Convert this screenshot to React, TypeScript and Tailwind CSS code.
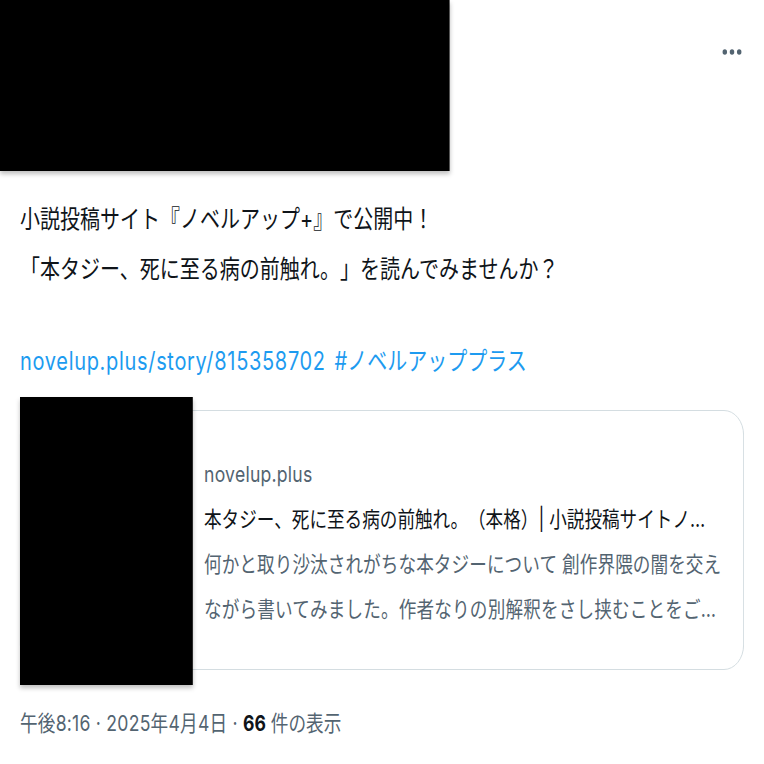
import React from 'react';

// The screenshot is horizontally squeezed (~80%), so the page is laid out at
// full width and scaled on the x axis.
const font = { fontFamily: '"Inter", "Noto Sans CJK JP", sans-serif' };

function MoreIcon() {
  return (
    <svg width="26" height="8" viewBox="0 0 26 8" className="text-[#536471]" fill="currentColor">
      <circle cx="4" cy="4" r="2.8" />
      <circle cx="13" cy="4" r="2.8" />
      <circle cx="22" cy="4" r="2.8" />
    </svg>
  );
}

export default function App() {
  return (
    <div className="w-[764px] h-[764px] overflow-hidden bg-white [text-spacing-trim:space-all]" style={font}>
      <div className="w-[955px] origin-top-left scale-x-[0.8] text-[#0f1419]">
        {/* header (redacted) */}
        <div className="flex items-start">
          <div className="w-[562px] h-[171px] bg-black shadow-[0_3px_5px_rgba(0,0,0,0.25)]" />
          <button className="ml-auto mr-[27px] mt-[48px]">
            <MoreIcon />
          </button>
        </div>

        <div className="px-[25px]">
          <p className="mt-[23px] text-[25px] leading-[50px]">
            小説投稿サイト『ノベルアップ+』で公開中！
            <br />
            「本タジー、死に至る病の前触れ。」を読んでみませんか？
          </p>

          <p className="mt-[50px] text-[25px] leading-[35px] text-[#1d9bf0]">
            <span className="tracking-[0.85px]">novelup.plus/story/815358702</span>
            <span className="ml-[11px]">#ノベルアッププラス</span>
          </p>

          {/* link card */}
          <div className="relative mt-[31px] h-[260px] flex rounded-[25px] border-[1.5px] border-[#cfd9de]">
            <div className="w-[216px] shrink-0" />
            <div className="flex flex-col justify-center pl-[13px] pt-[4px] text-[22px] leading-[45px] whitespace-nowrap">
              <div className="text-[#536471] tracking-[0.3px]">novelup.plus</div>
              <div>本タジー、死に至る病の前触れ。（本格）| 小説投稿サイトノ…</div>
              <div className="text-[#536471] tracking-[0.1px]">何かと取り沙汰されがちな本タジーについて 創作界隈の闇を交え</div>
              <div className="text-[#536471] tracking-[0.2px]">ながら書いてみました。作者なりの別解釈をさし挟むことをご…</div>
            </div>
            {/* redacted image */}
            <div className="absolute -left-[1.5px] -top-[14.5px] w-[216px] h-[288px] bg-black shadow-[0_3px_5px_rgba(0,0,0,0.25)]" />
          </div>

          <div className="mt-[37px] text-[22px] leading-[32px] text-[#536471]">
            <span className="tracking-[0.3px]">午後8:16 · 2025年4月4日 · </span>
            <span className="font-bold text-[#0f1419]">66</span> 件の表示
          </div>
        </div>
      </div>
    </div>
  );
}
